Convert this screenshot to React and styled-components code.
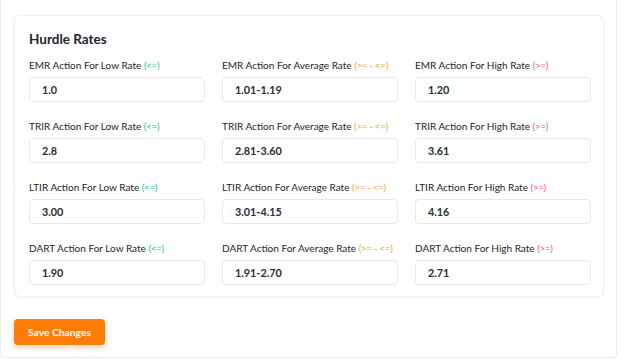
import React from 'react';
import styled, { createGlobalStyle } from 'styled-components';

const GlobalStyle = createGlobalStyle`
  body {
    margin: 0;
    background: #ffffff;
    font-family: "Lato", "Noto Sans", sans-serif;
    color: #2b2f38;
  }
`;

const rows = [
  { name: 'EMR', low: '1.0', avg: '1.01-1.19', high: '1.20' },
  { name: 'TRIR', low: '2.8', avg: '2.81-3.60', high: '3.61' },
  { name: 'LTIR', low: '3.00', avg: '3.01-4.15', high: '4.16' },
  { name: 'DART', low: '1.90', avg: '1.91-2.70', high: '2.71' },
];

const Page = styled.div`
  box-sizing: border-box;
  width: 617px;
  height: 358px;
  border: 1px solid #ebedf0;
  border-top: none;
  border-radius: 0 0 4px 4px;
  padding: 15px 13px 0 13px;
`;

const Card = styled.section`
  box-sizing: border-box;
  width: 590px;
  height: 282px;
  background: #fff;
  border: 1px solid #eef0f3;
  border-radius: 6px;
  box-shadow: 0 1px 3px rgba(0, 0, 0, 0.05);
  padding: 14px 13px 0 14px;
`;

const Title = styled.h2`
  margin: 0 0 10px 0;
  font-size: 13.5px;
  font-weight: 700;
  color: #1f2430;
  line-height: 18px;
`;

const Grid = styled.div`
  display: grid;
  grid-template-columns: repeat(3, 176px);
  column-gap: 17px;
  row-gap: 17px;
`;

const Field = styled.div`
  display: flex;
  flex-direction: column;
  gap: 5px;
`;

const Label = styled.label`
  font-size: 10px;
  line-height: 14px;
  color: #22262e;
  white-space: nowrap;
`;

const Hint = styled.span`
  color: ${p => p.$tone};
  letter-spacing: -0.4px;
`;

const Input = styled.input`
  box-sizing: border-box;
  width: 176px;
  height: 25px;
  border: 1px solid #e6e9ee;
  border-radius: 4px;
  padding: 0 12px;
  font-family: inherit;
  font-size: 10.8px;
  font-weight: 700;
  color: #2a2e36;
  background: #fff;
  outline: none;
`;

const Button = styled.button`
  margin-top: 22px;
  width: 91px;
  height: 26px;
  border: none;
  border-radius: 4px;
  background: #ff7d07;
  color: #fff;
  font-family: inherit;
  font-size: 10.3px;
  font-weight: 700;
  box-shadow: 0 3px 6px rgba(255, 125, 7, 0.3);
  cursor: pointer;
`;

const tones = {
  low: { text: '(<=)', color: '#2fc38a' },
  avg: { text: '(>= - <=)', color: '#f3a44e' },
  high: { text: '(>=)', color: '#ef6471' },
};

const levels = [
  ['low', 'Low'],
  ['avg', 'Average'],
  ['high', 'High'],
];

export default function App() {
  return (
    <>
      <GlobalStyle />
      <Page>
        <Card>
          <Title>Hurdle Rates</Title>
          <Grid>
            {rows.map(r =>
              levels.map(([key, word]) => (
                <Field key={r.name + key}>
                  <Label>
                    {r.name} Action For {word} Rate{' '}
                    <Hint $tone={tones[key].color}>{tones[key].text}</Hint>
                  </Label>
                  <Input defaultValue={r[key]} />
                </Field>
              ))
            )}
          </Grid>
        </Card>
        <Button>Save Changes</Button>
      </Page>
    </>
  );
}
